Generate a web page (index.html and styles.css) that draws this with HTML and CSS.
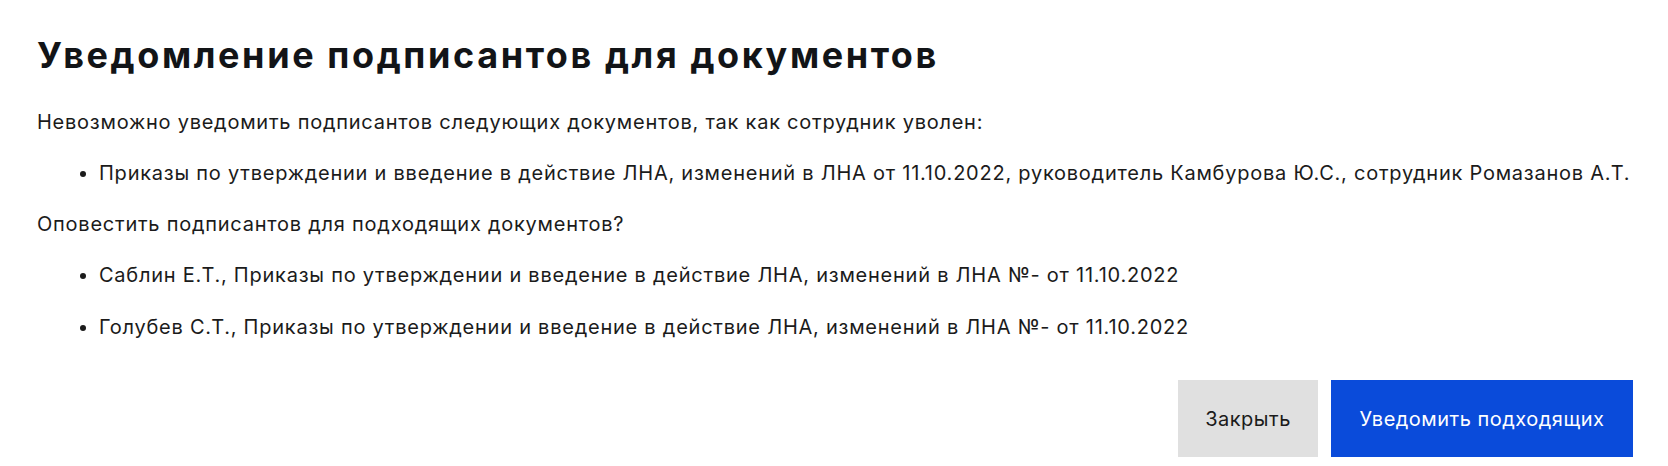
FILE: index.html
```html
<!DOCTYPE html>
<html lang="ru">
<head>
    <meta charset="UTF-8">
    <title>Уведомление подписантов</title>
    <link rel="stylesheet" href="styles.css">
</head>
<body>
    <div class="dialog">
        <h1 class="dialog-title">Уведомление подписантов для документов</h1>
        <p class="dialog-text">Невозможно уведомить подписантов следующих документов, так как сотрудник уволен:</p>
        <ul class="doc-list">
            <li>Приказы по утверждении и введение в действие ЛНА, изменений в ЛНА от 11.10.2022, руководитель Камбурова Ю.С., сотрудник Ромазанов А.Т.</li>
        </ul>
        <p class="dialog-text">Оповестить подписантов для подходящих документов?</p>
        <ul class="doc-list">
            <li>Саблин Е.Т., Приказы по утверждении и введение в действие ЛНА, изменений в ЛНА №- от 11.10.2022</li>
            <li>Голубев С.Т., Приказы по утверждении и введение в действие ЛНА, изменений в ЛНА №- от 11.10.2022</li>
        </ul>
        <div class="dialog-actions">
            <button class="btn btn-secondary">Закрыть</button>
            <button class="btn btn-primary">Уведомить подходящих</button>
        </div>
    </div>
</body>
</html>
```

FILE: styles.css
```css
body {
    margin: 0;
    background-color: #fff;
    font-family: Inter, Roboto, sans-serif;
    color: #1b1b1b;
}
.dialog {
    padding: 32px 35px 9px 37px;
}
.dialog-title {
    margin: 0 0 30px;
    font-family: Inter, 'Noto Sans', sans-serif;
    font-size: 36px;
    font-weight: 700;
    letter-spacing: 2.6px;
    line-height: 46px;
    color: #121417;
}
.dialog-text {
    margin: 0;
    font-size: 20px;
    letter-spacing: 0.76px;
    line-height: 28px;
}
.doc-list {
    margin: 23px 0 23px;
    padding-left: 62px;
    font-size: 20px;
    letter-spacing: 0.76px;
    line-height: 28px;
}
.doc-list li + li {
    margin-top: 24px;
}
.dialog-actions {
    display: flex;
    justify-content: flex-end;
    gap: 13px;
    margin-top: 39px;
}
.btn {
    height: 77px;
    border: none;
    border-radius: 0;
    font-family: Inter, Roboto, sans-serif;
    font-size: 20px;
    letter-spacing: 0.5px;
    padding: 0;
    text-align: center;
    cursor: pointer;
}
.btn-secondary {
    width: 140px;
    background-color: #e0e0e0;
    color: #1b1b1b;
}
.btn-primary {
    width: 302px;
    background-color: #0a4bda;
    color: #fff;
}
```
